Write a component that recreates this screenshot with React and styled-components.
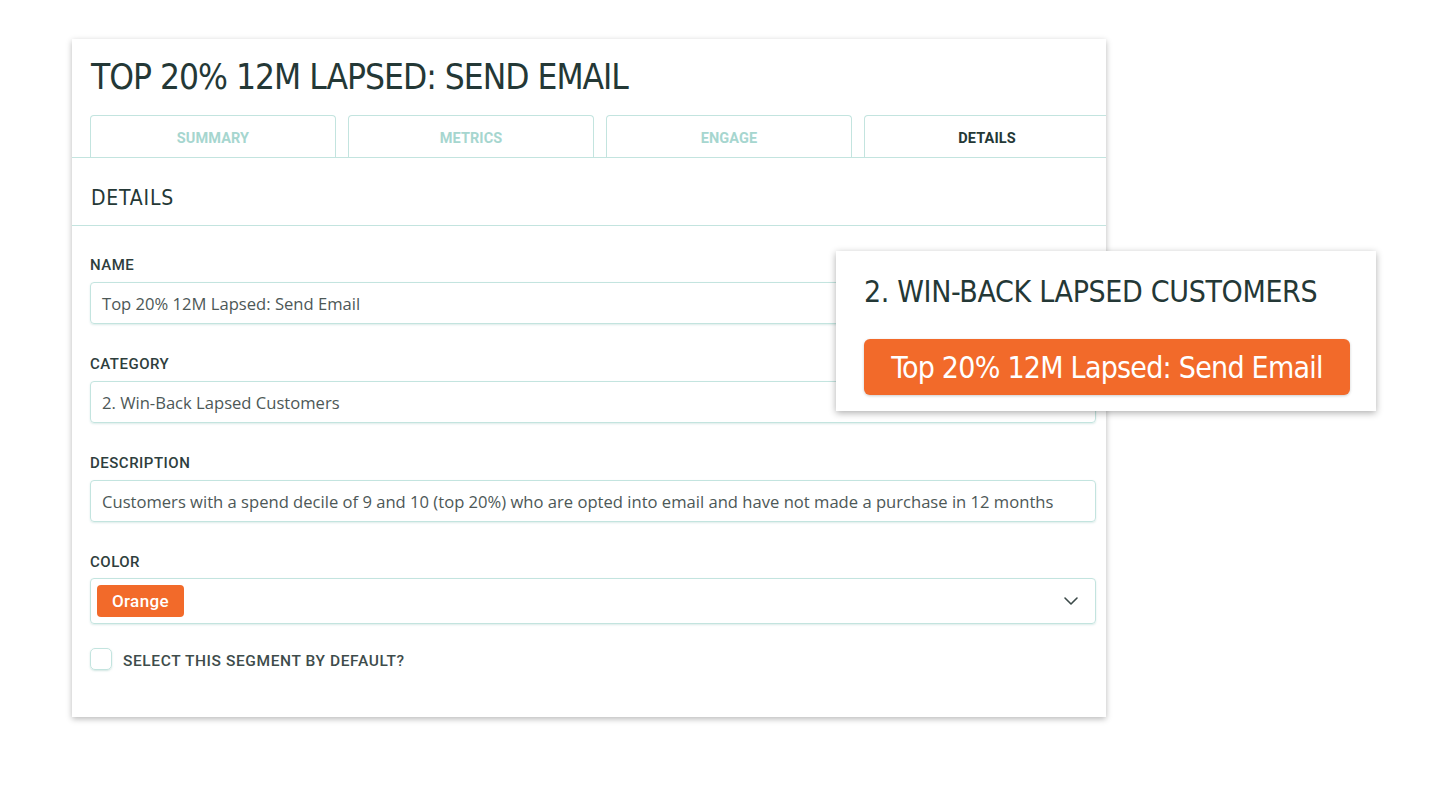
import React from "react";
import styled, { createGlobalStyle } from "styled-components";

const DIN = `"DejaVu Sans Condensed", Roboto, sans-serif`;
const MED = `Roboto, "DejaVu Sans Condensed", sans-serif`;
const BODY = `"Open Sans", "Noto Sans", sans-serif`;
const DARK = "#243836";
const LINE = "#c3e4df";
const ORANGE = "#f26a2a";

const Global = createGlobalStyle`
  html, body { margin: 0; padding: 0; background: #ffffff; }
  body { width: 1438px; height: 790px; overflow: hidden; }
  * { box-sizing: border-box; }
`;

const Stage = styled.div`
  position: relative;
  width: 1438px;
  height: 790px;
  padding: 39px 0 0 72px;
`;

const Card = styled.div`
  width: 1034px;
  height: 678px;
  background: #fff;
  box-shadow: 0 2px 6px rgba(0, 0, 0, 0.28);
  overflow: hidden;
  display: flex;
  flex-direction: column;
`;

const Title = styled.h1`
  margin: 0;
  padding: 18px 0 0 19px;
  font-family: ${DIN};
  font-weight: 400;
  font-size: 35px;
  line-height: 40px;
  letter-spacing: -1px;
  color: ${DARK};
`;

const TabBar = styled.div`
  display: flex;
  gap: 12px;
  margin-top: 18px;
  padding-left: 18px;
  border-bottom: 1px solid ${LINE};
  width: 1034px;
`;

const Tab = styled.div`
  flex: 0 0 246px;
  height: 42px;
  padding-top: 3px;
  border: 1px solid ${LINE};
  border-bottom: none;
  border-radius: 4px 4px 0 0;
  display: flex;
  align-items: center;
  justify-content: center;
  font-family: ${MED};
  font-weight: 700;
  font-size: 14.5px;
  letter-spacing: 0.1px;
  color: ${(p) => (p.$active ? DARK : "#a6d6cf")};
`;

const Section = styled.div`
  height: 68px;
  display: flex;
  align-items: center;
  padding: 12px 0 0 19px;
  border-bottom: 1px solid ${LINE};
  font-family: ${DIN};
  font-size: 21px;
  letter-spacing: 0.8px;
  color: ${DARK};
`;

const Form = styled.div`
  display: flex;
  flex-direction: column;
  gap: 31px;
  padding: 30px 10px 0 18px;
`;

const Field = styled.div`
  display: flex;
  flex-direction: column;
  gap: ${(p) => p.$gap || 8}px;
`;

const Label = styled.label`
  font-family: ${MED};
  font-weight: 500;
  font-size: 15px;
  line-height: 18px;
  letter-spacing: 0.5px;
  color: #2e3e3d;
`;

const Input = styled.div`
  height: 42px;
  border: 1px solid ${LINE};
  border-radius: 4px;
  box-shadow: 0 1px 2px rgba(120, 180, 170, 0.25);
  padding: 0 11px;
  display: flex;
  align-items: center;
  font-family: ${BODY};
  font-size: 16.6px;
  color: #4d5857;
  white-space: nowrap;
`;

const Select = styled(Input)`
  height: 46px;
  padding: 0 16px 0 6px;
  justify-content: space-between;
`;

const Pill = styled.span`
  display: inline-flex;
  align-items: center;
  justify-content: center;
  width: 87px;
  height: 32px;
  border-radius: 4px;
  background: ${ORANGE};
  color: #fff;
  font-family: ${MED};
  font-weight: 500;
  font-size: 17px;
  letter-spacing: 0.4px;
`;

const CheckRow = styled.div`
  display: flex;
  align-items: center;
  gap: 11px;
  margin-top: -7px;
`;

const Box = styled.span`
  width: 22px;
  height: 22px;
  border: 1.5px solid ${LINE};
  border-radius: 5px;
  box-shadow: 0 1px 2px rgba(120, 180, 170, 0.35);
`;

const CheckLabel = styled.span`
  padding-top: 3px;
  font-family: ${MED};
  font-weight: 500;
  font-size: 15.5px;
  letter-spacing: 0.6px;
  color: #3e4c4b;
`;

const Popup = styled.div`
  position: absolute;
  left: 836px;
  top: 251px;
  width: 540px;
  height: 160px;
  background: #fff;
  box-shadow: 0 2px 7px rgba(0, 0, 0, 0.32);
  padding: 24px 26px 0 28px;
  display: flex;
  flex-direction: column;
  gap: 30px;
`;

const PopTitle = styled.div`
  font-family: ${DIN};
  font-size: 30px;
  line-height: 34px;
  letter-spacing: -0.35px;
  color: ${DARK};
`;

const SegButton = styled.div`
  height: 56px;
  border-radius: 6px;
  background: ${ORANGE};
  box-shadow: 0 1px 3px rgba(0, 0, 0, 0.2);
  display: flex;
  align-items: center;
  justify-content: center;
  font-family: ${DIN};
  font-size: 30px;
  letter-spacing: -0.75px;
  color: #fff;
`;

const Chevron = () => (
  <svg width="16" height="10" viewBox="0 0 16 10" fill="none">
    <path d="M2 2l6 6 6-6" stroke="#3c4a49" strokeWidth="1.6" strokeLinecap="round" strokeLinejoin="round" />
  </svg>
);

export default function App() {
  return (
    <>
      <Global />
      <Stage>
        <Card>
          <Title>TOP 20% 12M LAPSED: SEND EMAIL</Title>
          <TabBar>
            <Tab>SUMMARY</Tab>
            <Tab>METRICS</Tab>
            <Tab>ENGAGE</Tab>
            <Tab $active>DETAILS</Tab>
          </TabBar>
          <Section>DETAILS</Section>
          <Form>
            <Field>
              <Label>NAME</Label>
              <Input>Top 20% 12M Lapsed: Send Email</Input>
            </Field>
            <Field>
              <Label>CATEGORY</Label>
              <Input>2. Win-Back Lapsed Customers</Input>
            </Field>
            <Field>
              <Label>DESCRIPTION</Label>
              <Input>
                Customers with a spend decile of 9 and 10 (top 20%) who are opted into email and have not made a purchase in 12 months
              </Input>
            </Field>
            <Field $gap={7}>
              <Label>COLOR</Label>
              <Select>
                <Pill>Orange</Pill>
                <Chevron />
              </Select>
            </Field>
            <CheckRow>
              <Box />
              <CheckLabel>SELECT THIS SEGMENT BY DEFAULT?</CheckLabel>
            </CheckRow>
          </Form>
        </Card>
        <Popup>
          <PopTitle>2. WIN-BACK LAPSED CUSTOMERS</PopTitle>
          <SegButton>Top 20% 12M Lapsed: Send Email</SegButton>
        </Popup>
      </Stage>
    </>
  );
}
